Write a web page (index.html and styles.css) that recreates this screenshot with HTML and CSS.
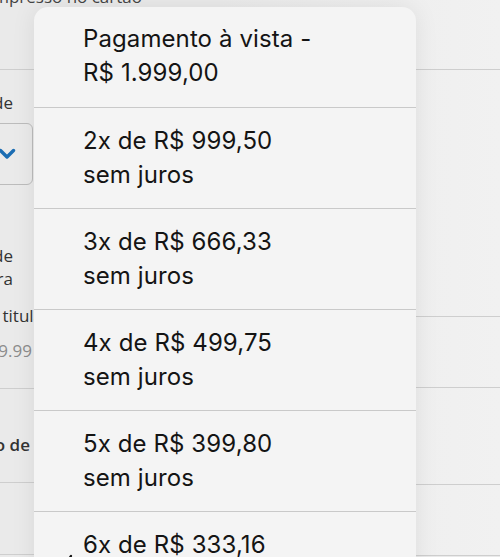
FILE: index.html
```html
<!doctype html>
<html lang="pt">
<head>
    <meta charset="UTF-8">
    <meta name="viewport" content="width=device-width, initial-scale=1.0">
    <title>Parcelamento</title>
    <link rel="stylesheet" href="styles.css">
</head>
<body>
<div class="page">
    <div class="col col_left">
        <div class="row row_name">
            <span class="end end_name">Nome impresso no cartão</span>
        </div>
        <div class="row row_card">
            <span class="end end_e">Validade</span>
            <div class="select">
                <svg width="18" height="12" viewBox="0 0 18 12"><path d="M2.5 2.5 L9 9 L15.5 2.5" fill="none" stroke="#1b6db3" stroke-width="3.4" stroke-linecap="round" stroke-linejoin="round"/></svg>
            </div>
            <span class="end end_e two">Código de<br>bandeira</span>
            <span class="end end_holder">Nome do titular</span>
            <span class="end end_cpf hint">CPF 999.999.999.99</span>
        </div>
        <div class="row row_plan">
            <span class="end end_plan bold">Tipo de</span>
        </div>
        <div class="row row_end"></div>
    </div>
    <div class="col col_right">
        <div class="row r1"></div>
        <div class="row r2"></div>
        <div class="row r3"></div>
        <div class="row r4"></div>
        <div class="row r5"></div>
    </div>
</div>

<!-- menu de parcelas -->
<div class="menu">
    <div class="option"><span class="check"></span><span class="text">Pagamento à vista -<br>R$ 1.999,00</span></div>
    <div class="option"><span class="check"></span><span class="text">2x de R$ 999,50<br>sem juros</span></div>
    <div class="option"><span class="check"></span><span class="text">3x de R$ 666,33<br>sem juros</span></div>
    <div class="option"><span class="check"></span><span class="text">4x de R$ 499,75<br>sem juros</span></div>
    <div class="option"><span class="check"></span><span class="text">5x de R$ 399,80<br>sem juros</span></div>
    <div class="option">
        <span class="check"><svg width="16" height="16" viewBox="0 0 16 16"><path d="M2 9 L6 13 L14 2" fill="none" stroke="#111" stroke-width="2.2" stroke-linecap="round" stroke-linejoin="round"/></svg></span>
        <span class="text">6x de R$ 333,16<br>sem juros</span>
    </div>
</div>
</body>
</html>
```

FILE: styles.css
```css
body {
    margin: 0;
    height: 557px;
    overflow: hidden;
    background-color: #eaeaea;
    font-family: "Open Sans", Arial, sans-serif;
    color: #333;
    position: relative;
}

.page {
    display: flex;
}

.col {
    display: flex;
    flex-direction: column;
}

.col_left {
    width: 220px;
}

.col_right {
    flex: 1;
    background: linear-gradient(to right, #ebebeb, #f1f1f1);
}

.row {
    display: flex;
    flex-direction: column;
    border-bottom: 1px solid #cecece;
    box-sizing: content-box;
    font-size: 17px;
    line-height: 22px;
}

/* textos cortados pelo menu: alinhados pela direita */
.end {
    display: flex;
    justify-content: flex-end;
    white-space: nowrap;
}

.end_name {
    width: 142px;
    margin-top: -14px;
    color: #444;
}

.end_e {
    width: 13px;
}

.end_holder {
    width: 50px;
    margin-top: 15px;
}

.end_cpf {
    width: 32px;
    margin-top: 13px;
}

.end_plan {
    width: 30px;
    margin-top: 45px;
}

.two {
    text-align: right;
    margin-top: 59px;
    line-height: 23px;
}

.hint {
    color: #8c8c8c;
}

.bold {
    font-weight: 600;
}

.row_name {
    height: 69px;
}

.row_card {
    height: 319px;
    padding-top: 22px;
    box-sizing: border-box;
}

.row_plan {
    height: 93px;
}

.row_end {
    height: 71px;
}

.select {
    width: 93px;
    height: 62px;
    margin: 9px 0 0 -60px;
    box-sizing: border-box;
    border: 1px solid #bcbcbc;
    border-radius: 6px;
    display: flex;
    align-items: center;
    justify-content: flex-end;
    padding-right: 16px;
}

.r1 { height: 69px; }
.r2 { height: 246px; }
.r3 { height: 70px; }
.r4 { height: 96px; }
.r5 { height: 70px; }

/* menu sobreposto */
.menu {
    position: absolute;
    left: 34px;
    top: 7px;
    width: 382px;
    background: #f4f4f4;
    border-radius: 14px 14px 0 0;
    box-shadow: 0 0 24px rgba(0, 0, 0, 0.08);
    font-family: Inter, Roboto, Arial, sans-serif;
    font-size: 24px;
    line-height: 34px;
    letter-spacing: 0.1px;
    color: #141414;
}

.option {
    display: flex;
    align-items: center;
    padding: 16px 0;
    border-bottom: 1px solid #c9c9c9;
}

.option:first-child {
    padding-top: 15px;
    padding-bottom: 17px;
}

.check {
    width: 49px;
    flex-shrink: 0;
    display: flex;
    justify-content: center;
    padding-left: 12px;
    box-sizing: border-box;
}
```
